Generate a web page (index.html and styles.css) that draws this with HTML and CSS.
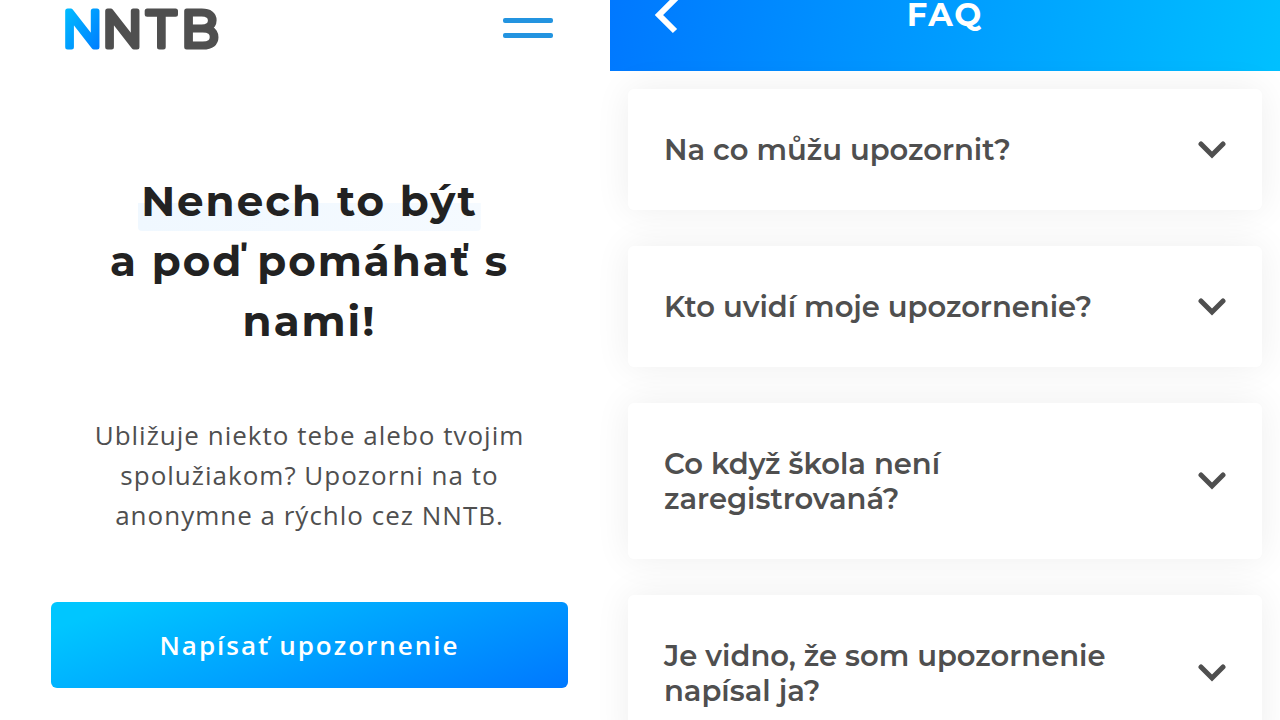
FILE: index.html
```html
<!DOCTYPE html>
<html lang="sk">
<head>
    <meta charset="UTF-8">
    <meta name="viewport" content="width=device-width, initial-scale=1.0">
    <title>NNTB</title>
    <link rel="stylesheet" href="styles.css">
</head>
<body>
    <div class="screens">
        <!-- Home screen -->
        <section class="home">
            <header class="home-header">
                <a href="#" class="logo">
                    <svg width="170" height="64" viewBox="0 0 170 64">
                        <defs>
                            <linearGradient id="logo-blue" x1="0" y1="0" x2="1" y2="1">
                                <stop offset="0" stop-color="#00c6ff"/>
                                <stop offset="1" stop-color="#0072ff"/>
                            </linearGradient>
                        </defs>
                        <text class="logo-text" y="47"><tspan x="42">N</tspan><tspan x="87">T</tspan><tspan x="121">B</tspan></text>
                        <text class="logo-text logo-first" x="2" y="47">N</text>
                    </svg>
                </a>
                <button class="menu-btn" type="button" aria-label="Menu">
                    <span></span>
                    <span></span>
                </button>
            </header>

            <main class="hero">
                <h1 class="hero-title"><span class="highlight">Nenech to být</span><br>a poď pomáhať s nami!</h1>
                <p class="hero-text">Ubližuje niekto tebe alebo tvojim spolužiakom? Upozorni na to anonymne a rýchlo cez NNTB.</p>
                <button class="report-btn" type="button">Napísať upozornenie</button>
            </main>
        </section>

        <!-- FAQ screen -->
        <section class="faq">
            <header class="faq-header">
                <a href="#" class="back-link" aria-label="Späť">
                    <svg width="26" height="34" viewBox="0 0 26 34">
                        <path d="M23 -3L5 15L21 31" fill="none" stroke="#fff" stroke-width="6"/>
                    </svg>
                </a>
                <h2 class="faq-title">FAQ</h2>
            </header>

            <div class="faq-list">
                <button class="faq-item" type="button" aria-expanded="false">
                    <span>Na co můžu upozornit?</span>
                    <svg class="chevron" viewBox="0 0 28 18"><path d="M3 3L14 14L25 3"/></svg>
                </button>
                <button class="faq-item" type="button" aria-expanded="false">
                    <span>Kto uvidí moje upozornenie?</span>
                    <svg class="chevron" viewBox="0 0 28 18"><path d="M3 3L14 14L25 3"/></svg>
                </button>
                <button class="faq-item" type="button" aria-expanded="false">
                    <span>Co když škola není<br>zaregistrovaná?</span>
                    <svg class="chevron" viewBox="0 0 28 18"><path d="M3 3L14 14L25 3"/></svg>
                </button>
                <button class="faq-item" type="button" aria-expanded="false">
                    <span>Je vidno, že som upozornenie<br>napísal ja?</span>
                    <svg class="chevron" viewBox="0 0 28 18"><path d="M3 3L14 14L25 3"/></svg>
                </button>
            </div>
        </section>
    </div>
</body>
</html>
```
FILE: styles.css
```css
* {
    box-sizing: border-box;
}
body {
    margin: 0;
    font-family: 'Open Sans', sans-serif;
    background-color: #ffffff;
    color: #4f4f4f;
}
button {
    font: inherit;
    color: inherit;
    border: none;
    cursor: pointer;
}
.screens {
    display: grid;
    grid-template-columns: 610fr 670fr;
    height: 100vh;
    overflow: hidden;
}
/* Home screen */
.home-header {
    display: flex;
    justify-content: space-between;
    align-items: flex-start;
    padding: 0 57px 0 60px;
}
.logo svg {
    display: block;
    overflow: visible;
}
.logo-text {
    font-family: Montserrat, sans-serif;
    font-size: 50px;
    font-weight: 400;
    fill: #4f4f4f;
    stroke: #4f4f4f;
    stroke-width: 5px;
    stroke-linejoin: round;
}
.logo-first {
    fill: url(#logo-blue);
    stroke: url(#logo-blue);
}
.menu-btn {
    display: flex;
    flex-direction: column;
    gap: 10px;
    padding: 0;
    margin-top: 18px;
    background: none;
}
.menu-btn span {
    width: 50px;
    height: 5px;
    border-radius: 2px;
    background-color: #2394e0;
}
.hero {
    padding: 0 42px 0 51px;
    margin-top: 107px;
    text-align: center;
}
.hero-title {
    margin: 0;
    font-family: Montserrat, sans-serif;
    font-size: 42px;
    font-weight: 700;
    line-height: 60px;
    letter-spacing: 2px;
    color: #222222;
}
.highlight {
    padding: 0 3px 4px;
    background: linear-gradient(to right, #f0f8ff, #f5faff) no-repeat bottom / 100% 28px;
    border-radius: 4px;
}
.hero-text {
    margin: 64px 0 67px;
    padding: 0 36px;
    font-size: 26px;
    line-height: 40px;
    letter-spacing: 1px;
}
.report-btn {
    width: 100%;
    padding: 25px;
    border-radius: 6px;
    background: linear-gradient(160deg, #00c6ff 10%, #0078ff);
    color: #ffffff;
    font-size: 26px;
    font-weight: 600;
    line-height: 36px;
    letter-spacing: 2px;
}
/* FAQ screen */
.faq-header {
    display: grid;
    grid-template-columns: 1fr auto 1fr;
    height: 71px;
    padding: 0 44px;
    background: linear-gradient(100deg, #0078ff, #00c0ff);
    color: #ffffff;
}
.back-link svg {
    display: block;
}
.faq-title {
    margin: 0;
    font-family: Montserrat, sans-serif;
    font-size: 32px;
    font-weight: 700;
    line-height: 30px;
    letter-spacing: 2px;
}
.faq-list {
    display: flex;
    flex-direction: column;
    gap: 36px;
    padding: 18px;
}
.faq-item {
    display: flex;
    justify-content: space-between;
    align-items: center;
    padding: 43px 36px;
    border-radius: 6px;
    background-color: #ffffff;
    box-shadow: 0 0 36px rgba(0, 0, 0, 0.07);
    font-family: Montserrat, sans-serif;
    font-size: 29px;
    font-weight: 600;
    line-height: 35px;
    text-align: left;
}
.chevron {
    flex: none;
    width: 28px;
    height: 18px;
    fill: none;
    stroke: #4f4f4f;
    stroke-width: 5;
    stroke-linecap: round;
}
```
